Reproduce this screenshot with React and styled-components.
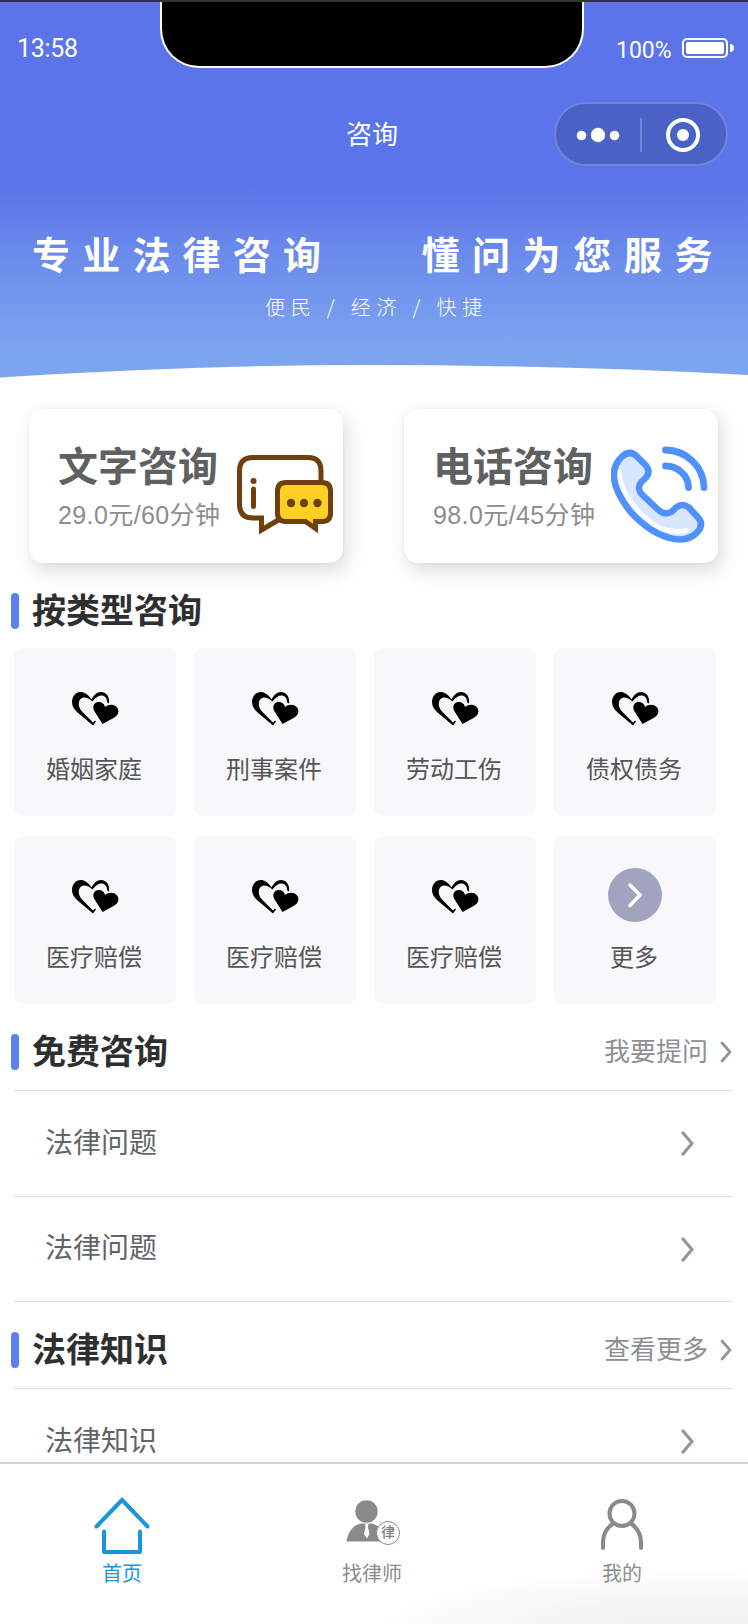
import React from 'react';
import styled, { createGlobalStyle } from 'styled-components';

const GlobalStyle = createGlobalStyle`
  * { box-sizing: border-box; }
  body {
    margin: 0;
    background: #fff;
    font-family: "Liberation Sans", "Noto Sans CJK SC", sans-serif;
  }
  svg { display: block; flex: none; }
`;

const Screen = styled.div`
  width: 748px;
  height: 1624px;
  display: flex;
  flex-direction: column;
  overflow: hidden;
  background: #fefefe;
  border-top: 2px solid #333436;
`;

const Header = styled.header`
  flex: none;
  height: 376px;
  display: flex;
  flex-direction: column;
  color: #fff;
  background: linear-gradient(#5b74ea 0, #5b74ea 182px, #6c8dec 260px, #7ba3ef 340px, #7da6ef 376px);
`;

const StatusBar = styled.div`
  display: flex;
  height: 66px;
  font-family: Roboto, sans-serif;
`;

const Clock = styled.div`
  width: 160px;
  padding: 32px 0 0 17px;
  font-size: 25px;
  line-height: 30px;
  letter-spacing: -0.3px;
`;

const Notch = styled.div`
  width: 424px;
  height: 66px;
  background: #000;
  border: 2px solid #fff;
  border-top: 0;
  border-radius: 0 0 39px 39px;
`;

const Power = styled.div`
  display: flex;
  padding: 35px 0 0 32px;
  font-size: 23px;
  line-height: 28px;
`;

const Battery = styled.div`
  display: flex;
  align-items: center;
  height: 20px;
  margin: 1px 0 0 10px;
`;

const BatteryShell = styled.div`
  width: 46px;
  height: 20px;
  padding: 2px;
  border: 2px solid #fff;
  border-radius: 5px;

  &::before {
    content: '';
    display: block;
    height: 12px;
    background: #fff;
    border-radius: 2px;
  }
`;

const BatteryTip = styled.div`
  width: 4px;
  height: 8px;
  margin-left: 2px;
  background: #fff;
  border-radius: 0 4px 4px 0;
`;

const NavBar = styled.div`
  display: grid;
  grid-template-columns: 1fr auto 1fr;
  align-items: center;
  height: 132px;
  padding: 0 20px 0 16px;
`;

const NavTitle = styled.h1`
  grid-column: 2;
  margin: 0;
  padding-top: 2px;
  font-size: 26px;
  font-weight: 400;
  line-height: 36px;
`;

const Capsule = styled.div`
  justify-self: end;
  display: flex;
  align-items: center;
  justify-content: space-between;
  width: 174px;
  height: 64px;
  padding: 2px 25px 0 20px;
  border: 2px solid #7084d8;
  border-radius: 32px;
  background: #4a61c6;
`;

const CapsuleDivider = styled.div`
  width: 2px;
  height: 34px;
  margin-left: -4px;
  background: #6d82d8;
`;

const Slogan = styled.div`
  display: flex;
  justify-content: space-between;
  height: 56px;
  margin-top: 28px;
  padding: 0 23px 0 32px;
  font-size: 38px;
  font-weight: 700;
  line-height: 56px;
`;

const SloganPart = styled.span`
  letter-spacing: ${(p) => p.$spacing}px;
`;

const Tagline = styled.p`
  flex: 1;
  margin: 0;
  padding: 9px 0 0 265px;
  font-family: "Noto Sans CJK SC", sans-serif;
  font-size: 20px;
  font-weight: 300;
  line-height: 28px;
  letter-spacing: 5.8px;
  white-space: nowrap;
`;

const Content = styled.main`
  flex: 1;
  min-height: 0;
  overflow: hidden;
`;

const Services = styled.section`
  display: flex;
  justify-content: space-between;
  padding: 31px 30px 0 29px;
`;

const ServiceCard = styled.article`
  display: flex;
  width: 314px;
  height: 154px;
  padding: 33px 0 0 29px;
  border-radius: 14px;
  background: #fff;
  box-shadow: 4px 8px 18px rgba(0, 0, 0, 0.13), 0 0 3px rgba(0, 0, 0, 0.06);
`;

const ServiceText = styled.div`
  width: 178px;
  padding-top: 1px;
  white-space: nowrap;
`;

const ServiceName = styled.h2`
  margin: 0;
  font-size: 40px;
  font-weight: 700;
  line-height: 48px;
  color: #5e6062;
`;

const ServicePrice = styled.div`
  font-size: 25px;
  line-height: 36px;
  margin-top: 6px;
  letter-spacing: 0.4px;
  color: #8d8d8d;
`;

const SectionHead = styled.div`
  display: flex;
  align-items: center;
  height: ${(p) => p.$height}px;
  padding: ${(p) => p.$drop}px 16px 0 10.5px;
`;

const Marker = styled.div`
  width: 8px;
  height: 36px;
  margin-right: 13.5px;
  border-radius: 4px;
  background: #5b80f3;
`;

const SectionTitle = styled.h2`
  flex: 1;
  margin: 0;
  font-size: 34px;
  font-weight: 700;
  line-height: 48px;
  color: #2e2f30;
`;

const MoreLink = styled.a`
  display: flex;
  align-items: center;
  gap: 12px;
  font-size: 26px;
  line-height: 36px;
  color: #8d9092;
`;

const TypeGrid = styled.section`
  display: grid;
  grid-template-columns: repeat(4, 162px);
  gap: 20px 18px;
  padding-left: 14px;
`;

const TypeTile = styled.div`
  display: flex;
  flex-direction: column;
  align-items: center;
  height: 168px;
  border-radius: 9px;
  background: #f8f8fa;
`;

const TileIcon = styled.div`
  display: flex;
  align-items: center;
  height: 105px;
  padding-top: ${(p) => (p.$large ? 12 : 16)}px;
`;

const TileName = styled.div`
  margin-right: 2px;
  font-size: 24px;
  line-height: 34px;
  color: #545556;
`;

const List = styled.div`
  margin: 0 15px 0 14px;
`;

const ListRow = styled.div`
  display: flex;
  align-items: center;
  justify-content: space-between;
  height: 106px;
  padding: 0 39px 0 31px;
  border-top: 1px solid #dedfe0;
  font-size: 28px;
  line-height: 40px;
  color: #626466;

  &:last-child { border-bottom: ${(p) => (p.$closed ? '1px solid #dedfe0' : '0')}; }
`;

const TabBar = styled.nav`
  flex: none;
  display: flex;
  height: 162px;
  border-top: 2px solid #d3d3d3;
  background:
    radial-gradient(ellipse 310px 62px at 690px 168px, #f0f0f0 0, #f5f5f5 50%, rgba(254, 254, 254, 0) 100%),
    #fefefe;
`;

const Tab = styled.div`
  flex: 0 0 250px;
  display: flex;
  flex-direction: column;
  align-items: center;
  padding-top: 33px;
  font-size: 20px;
  line-height: 28px;
  color: ${(p) => (p.$active ? '#1a97db' : '#8a8c8e')};

  &:first-child { margin-left: -3px; }
`;

const TabIcon = styled.div`
  height: 63px;
`;

const LawyerIcon = styled.div`
  position: relative;
`;

const LawBadge = styled.span`
  position: absolute;
  left: 32px;
  top: 24px;
  width: 24px;
  height: 24px;
  border: 1.5px solid #8a8a8a;
  border-radius: 50%;
  background: #fefefe;
  font-size: 14px;
  font-weight: 500;
  line-height: 21px;
  text-align: center;
  color: #808080;
`;

const Chevron = ({ w = 13, h = 25, color = '#949698', stroke = 3.2 }) => (
  <svg width={w} height={h} viewBox={`0 0 ${w} ${h}`} fill="none" stroke={color} strokeWidth={stroke} strokeLinecap="round" strokeLinejoin="round">
    <path d={`M2 2 L${w - 2} ${h / 2} L2 ${h - 2}`} />
  </svg>
);

const HeaderCurve = () => (
  <svg width="748" height="14" viewBox="0 0 748 14">
    <path d="M0 13.5 Q190 1 365 1 Q560 1 748 11 V14 H0 Z" fill="#fefefe" />
  </svg>
);

const ChatIcon = () => (
  <svg width="98" height="98" viewBox="0 0 98 98" fill="none" stroke="#6f3f0c" strokeWidth="5">
    <path d="M85 42 V29 Q85 15.500 72 15.500 H17 Q3.500 15.500 3.500 29 V62 Q3.500 76 17 76 H25.500 V88 L44 77" />
    <circle cx="17.500" cy="39" r="3" fill="#6f3f0c" stroke="none" />
    <path d="M17.500 47 V64.500" strokeLinecap="round" />
    <path d="M50 40.500 H86 Q94.500 40.500 94.500 49 V71 Q94.500 79.500 86 79.500 H79.500 V86.500 L69.500 79.500 H50 Q41.500 79.500 41.500 71 V49 Q41.500 40.500 50 40.500 Z" fill="#fed021" />
    <g fill="#6f3f0c" stroke="none">
      <circle cx="55" cy="61" r="4.200" />
      <circle cx="68" cy="61" r="4.200" />
      <circle cx="81.500" cy="61" r="4.200" />
    </g>
  </svg>
);

const PhoneIcon = () => (
  <svg width="98" height="102" viewBox="1 -3.500 98 102" fill="none" strokeLinecap="round" strokeLinejoin="round">
    <path d="M12 11 Q20 4 27 11 L36 20 Q41 26 36 32 L31 37 Q27 42 31 48 L49 65 Q55 70 62 66 L66 62 Q72 57 79 62 L88 72 Q94 78 88 86 Q77 98 58 92 Q40 87 21 67 Q-8 30 12 11 Z" fill="#d8e7fd" />
    <path d="M9 26 Q11 50 34 71 Q54 90 76 85" stroke="#f8fbff" strokeWidth="5" />
    <path d="M12 11 Q20 4 27 11 L36 20 Q41 26 36 32 L31 37 Q27 42 31 48 L49 65 Q55 70 62 66 L66 62 Q72 57 79 62 L88 72 Q94 78 88 86 Q77 98 58 92 Q40 87 21 67 Q-8 30 12 11 Z" stroke="#4e91fc" strokeWidth="6.500" />
    <g stroke="#4e91fc" strokeWidth="6.800">
      <path d="M55.500 4.500 A39 38 0 0 1 94 42" />
      <path d="M55.500 20.500 A23 22 0 0 1 78.500 42" />
    </g>
  </svg>
);

const HeartsIcon = () => (
  <svg width="47" height="34" viewBox="0 0 47 34">
    <path d="M19.500 7.500 C16 2 12 0 9 0 C3 0 0 5 0 10 C0 14 2 17 5 20 L21 33.500 L24 29.500 L23 28.500 L21 30.500 L10 19.500 C6 15 6 10 8.500 7 C11.500 4 16 5.500 20.500 9.500 C24 5 27 3.200 30 3.500 C33.500 4 35 6.500 35.200 10.500 L37 11.500 C38 5 34.500 0 29 0 C25 0 21.500 3.500 19.500 7.500 Z" />
    <path d="M30.500 32 L22 18.500 C20 13.500 23 10 26.500 10 C30 10 32.500 12 33 15 C37 11.500 43 12 45.500 16 C48 21 45 24 41.500 26 Z" />
  </svg>
);

const MoreIcon = () => (
  <svg width="54" height="54" viewBox="0 0 54 54">
    <circle cx="27" cy="27" r="27" fill="#a2a4bf" />
    <path d="M22 17 L32 27 L22 37.500" fill="none" stroke="#fff" strokeWidth="3.500" strokeLinecap="round" strokeLinejoin="round" />
  </svg>
);

const DotsIcon = () => (
  <svg width="44" height="16" viewBox="0 0 44 16" fill="#fff">
    <circle cx="5.500" cy="8.500" r="4.800" />
    <circle cx="22" cy="8" r="7.200" />
    <circle cx="38.500" cy="8.500" r="4.800" />
  </svg>
);

const TargetIcon = () => (
  <svg width="36" height="36" viewBox="0 0 36 36">
    <circle cx="18" cy="18" r="15" fill="none" stroke="#fff" strokeWidth="4" />
    <circle cx="18" cy="18" r="6" fill="#fff" />
  </svg>
);

const HomeIcon = () => (
  <svg width="56" height="58" viewBox="0 0 56 58" fill="none" stroke="#1a97db" strokeWidth="4" strokeLinecap="round">
    <path d="M2.500 29.500 L28 3 L53.500 29.500" />
    <path d="M10 34.500 V55 H46 V34.500" strokeLinejoin="round" />
  </svg>
);

const PersonSuit = () => (
  <svg width="56" height="48" viewBox="0 0 56 48" fill="#8a8a8a">
    <circle cx="22.500" cy="14.500" r="11.200" />
    <path d="M2.500 44.500 C4 33 11.500 26.500 18.500 26.500 H26.500 C33.500 26.500 40.500 34 41.500 44.500 Z" />
    <path d="M21 26.500 H24.500 L24 30 L25.500 37 L22.800 41.500 L20 37 L21.500 30 Z" fill="#fefefe" />
  </svg>
);

const UserIcon = () => (
  <svg width="44" height="56" viewBox="0 0 44 56" fill="none" stroke="#8a8a8a" strokeWidth="4" strokeLinecap="round">
    <circle cx="22" cy="16.500" r="12.500" />
    <path d="M13 26.500 Q3 33.500 3 45.500 V51 M31 26.500 Q41 33.500 41 45.500 V51" />
  </svg>
);

const types = ['婚姻家庭', '刑事案件', '劳动工伤', '债权债务', '医疗赔偿', '医疗赔偿', '医疗赔偿'];

function Heading({ title, link, height, drop }) {
  return (
    <SectionHead $height={height} $drop={drop}>
      <Marker />
      <SectionTitle>{title}</SectionTitle>
      {link && (
        <MoreLink>
          {link}
          <Chevron w={12} h={22} stroke={2.8} />
        </MoreLink>
      )}
    </SectionHead>
  );
}

export default function App() {
  return (
    <>
      <GlobalStyle />
      <Screen>
        <Header>
          <StatusBar>
            <Clock>13:58</Clock>
            <Notch />
            <Power>
              100%
              <Battery>
                <BatteryShell />
                <BatteryTip />
              </Battery>
            </Power>
          </StatusBar>
          <NavBar>
            <NavTitle>咨询</NavTitle>
            <Capsule>
              <DotsIcon />
              <CapsuleDivider />
              <TargetIcon />
            </Capsule>
          </NavBar>
          <Slogan>
            <SloganPart $spacing={12.2}>专业法律咨询</SloganPart>
            <SloganPart $spacing={12.6}>懂问为您服务</SloganPart>
          </Slogan>
          <Tagline>便民 / 经济 / 快捷</Tagline>
          <HeaderCurve />
        </Header>

        <Content>
          <Services>
            <ServiceCard>
              <ServiceText>
                <ServiceName>文字咨询</ServiceName>
                <ServicePrice>29.0元/60分钟</ServicePrice>
              </ServiceText>
              <ChatIcon />
            </ServiceCard>
            <ServiceCard>
              <ServiceText>
                <ServiceName>电话咨询</ServiceName>
                <ServicePrice>98.0元/45分钟</ServicePrice>
              </ServiceText>
              <PhoneIcon />
            </ServiceCard>
          </Services>

          <Heading title="按类型咨询" height={85} drop={10} />
          <TypeGrid>
            {types.map((name, i) => (
              <TypeTile key={i}>
                <TileIcon><HeartsIcon /></TileIcon>
                <TileName>{name}</TileName>
              </TypeTile>
            ))}
            <TypeTile>
              <TileIcon $large><MoreIcon /></TileIcon>
              <TileName>更多</TileName>
            </TypeTile>
          </TypeGrid>

          <Heading title="免费咨询" link="我要提问" height={86} drop={10} />
          <List>
            <ListRow>法律问题<Chevron /></ListRow>
            <ListRow $closed>法律问题<Chevron /></ListRow>
          </List>

          <Heading title="法律知识" link="查看更多" height={86} drop={10} />
          <List>
            <ListRow>法律知识<Chevron /></ListRow>
          </List>
        </Content>

        <TabBar>
          <Tab $active>
            <TabIcon><HomeIcon /></TabIcon>
            首页
          </Tab>
          <Tab>
            <TabIcon>
              <LawyerIcon>
                <PersonSuit />
                <LawBadge>律</LawBadge>
              </LawyerIcon>
            </TabIcon>
            找律师
          </Tab>
          <Tab>
            <TabIcon><UserIcon /></TabIcon>
            我的
          </Tab>
        </TabBar>
      </Screen>
    </>
  );
}
